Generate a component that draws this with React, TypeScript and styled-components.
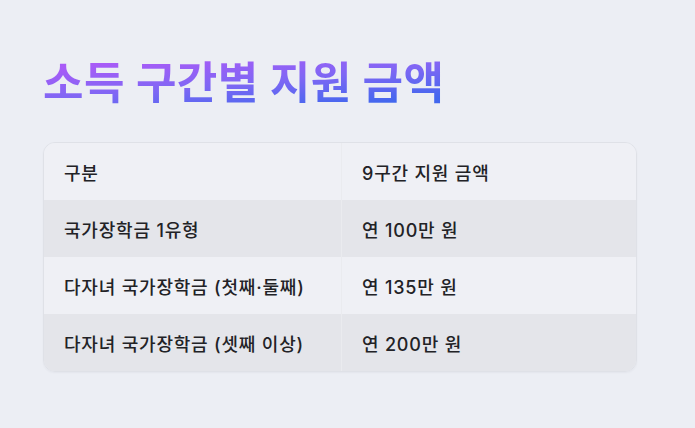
import styled, { createGlobalStyle } from "styled-components";

const GlobalStyle = createGlobalStyle`
  body {
    margin: 0;
    background: #eceef4;
    font-family: Inter, "Noto Sans CJK KR", "Noto Sans", sans-serif;
    color: #222226;
  }
`;

const Page = styled.main`
  padding: 55px 58px 40px 43px;
`;

const Title = styled.h1`
  margin: 0 0 31px;
  font-size: 44px;
  font-weight: 700;
  line-height: 56px;
  letter-spacing: 0.5px;
  display: inline-block;
  background: linear-gradient(175deg, #a95bf7 15%, #7f67f4 50%, #4267ee 85%);
  -webkit-background-clip: text;
  background-clip: text;
  color: transparent;
`;

const Card = styled.div`
  border: 1px solid #dfe1e7;
  border-radius: 12px;
  overflow: hidden;
  box-shadow: 0 1px 2px rgba(20, 24, 40, 0.04);
`;

const Row = styled.div<{ $shaded?: boolean }>`
  display: grid;
  grid-template-columns: 298px 1fr;
  height: 57px;
  background: ${({ $shaded }) => ($shaded ? "#e4e5ea" : "#eff0f5")};
`;

const Cell = styled.div<{ $first?: boolean }>`
  display: flex;
  align-items: center;
  padding: 0 20px;
  font-size: 18px;
  font-weight: 500;
  letter-spacing: 0.8px;
  border-right: ${({ $first }) => ($first ? "1px solid #eaebef" : "none")};
`;

const rows = [
  ["국가장학금 1유형", "연 100만 원"],
  ["다자녀 국가장학금 (첫째·둘째)", "연 135만 원"],
  ["다자녀 국가장학금 (셋째 이상)", "연 200만 원"],
];

export default function App() {
  return (
    <>
      <GlobalStyle />
      <Page>
        <Title>소득 구간별 지원 금액</Title>
        <Card>
          <Row>
            <Cell $first>구분</Cell>
            <Cell>9구간 지원 금액</Cell>
          </Row>
          {rows.map(([label, amount], i) => (
            <Row key={label} $shaded={i % 2 === 0}>
              <Cell $first>{label}</Cell>
              <Cell>{amount}</Cell>
            </Row>
          ))}
        </Card>
      </Page>
    </>
  );
}
